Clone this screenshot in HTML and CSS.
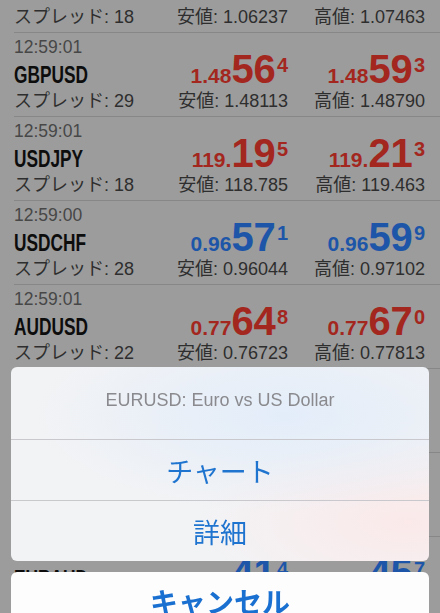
FILE: index.html
```html
<!DOCTYPE html>
<html lang="ja">
<head>
<meta charset="utf-8">
<title>Quotes</title>
<link rel="stylesheet" href="styles.css">
</head>
<body>
<div class="list">
  <div class="row">
    <div class="time">12:59:01</div>
    <div class="sym"><span>EURUSD</span></div>
    <div class="px red"><span class="s">1.06</span><span class="b">81</span><span class="u">9</span></div>
    <div class="px red ask"><span class="s">1.06</span><span class="b">83</span><span class="u">7</span></div>
    <div class="sub">スプレッド: 18</div>
    <div class="sub lo">安値: 1.06237</div>
    <div class="sub hi">高値: 1.07463</div>
  </div>
  <div class="row">
    <div class="time">12:59:01</div>
    <div class="sym"><span>GBPUSD</span></div>
    <div class="px red"><span class="s">1.48</span><span class="b">56</span><span class="u">4</span></div>
    <div class="px red ask"><span class="s">1.48</span><span class="b">59</span><span class="u">3</span></div>
    <div class="sub">スプレッド: 29</div>
    <div class="sub lo">安値: 1.48113</div>
    <div class="sub hi">高値: 1.48790</div>
  </div>
  <div class="row">
    <div class="time">12:59:01</div>
    <div class="sym"><span>USDJPY</span></div>
    <div class="px red"><span class="s">119.</span><span class="b">19</span><span class="u">5</span></div>
    <div class="px red ask"><span class="s">119.</span><span class="b">21</span><span class="u">3</span></div>
    <div class="sub">スプレッド: 18</div>
    <div class="sub lo">安値: 118.785</div>
    <div class="sub hi">高値: 119.463</div>
  </div>
  <div class="row">
    <div class="time">12:59:00</div>
    <div class="sym"><span>USDCHF</span></div>
    <div class="px blue"><span class="s">0.96</span><span class="b">57</span><span class="u">1</span></div>
    <div class="px blue ask"><span class="s">0.96</span><span class="b">59</span><span class="u">9</span></div>
    <div class="sub">スプレッド: 28</div>
    <div class="sub lo">安値: 0.96044</div>
    <div class="sub hi">高値: 0.97102</div>
  </div>
  <div class="row">
    <div class="time">12:59:01</div>
    <div class="sym"><span>AUDUSD</span></div>
    <div class="px red"><span class="s">0.77</span><span class="b">64</span><span class="u">8</span></div>
    <div class="px red ask"><span class="s">0.77</span><span class="b">67</span><span class="u">0</span></div>
    <div class="sub">スプレッド: 22</div>
    <div class="sub lo">安値: 0.76723</div>
    <div class="sub hi">高値: 0.77813</div>
  </div>
  <div class="row">
    <div class="time">12:59:01</div>
    <div class="sym"><span>USDCAD</span></div>
    <div class="px blue"><span class="s">1.25</span><span class="b">31</span><span class="u">2</span></div>
    <div class="px blue ask"><span class="s">1.25</span><span class="b">33</span><span class="u">8</span></div>
    <div class="sub">スプレッド: 26</div>
    <div class="sub lo">安値: 1.24965</div>
    <div class="sub hi">高値: 1.25611</div>
  </div>
  <div class="row">
    <div class="time">12:59:01</div>
    <div class="sym"><span>EURJPY</span></div>
    <div class="px red"><span class="s">127.</span><span class="b">51</span><span class="u">4</span></div>
    <div class="px red ask"><span class="s">127.</span><span class="b">54</span><span class="u">2</span></div>
    <div class="sub">スプレッド: 28</div>
    <div class="sub lo">安値: 126.981</div>
    <div class="sub hi">高値: 127.716</div>
  </div>
  <div class="row">
    <div class="time">12:59:01</div>
    <div class="sym"><span>EURAUD</span></div>
    <div class="px blue"><span class="s">1.37</span><span class="b">41</span><span class="u">4</span></div>
    <div class="px blue ask"><span class="s">1.37</span><span class="b">45</span><span class="u">7</span></div>
    <div class="sub">スプレッド: 43</div>
    <div class="sub lo">安値: 1.36812</div>
    <div class="sub hi">高値: 1.37930</div>
  </div>
</div>

<div class="sheet">
  <div class="group">
    <div class="title">EURUSD: Euro vs US Dollar</div>
    <div class="action">チャート</div>
    <div class="action">詳細</div>
  </div>
  <div class="group cancel">
    <div class="action bold">キャンセル</div>
  </div>
</div>
</body>
</html>
```

FILE: styles.css
```css
html, body {
  margin: 0;
  padding: 0;
}
body {
  width: 440px;
  height: 613px;
  overflow: hidden;
  background: #9c9c9c;
  font-family: "Liberation Sans", "Noto Sans CJK JP", sans-serif;
  color: #2c2c2c;
}

.list {
  margin-top: -51px;
  padding-left: 14px;
}

.row {
  display: grid;
  grid-template-columns: 1fr 120px 137px;
  grid-template-rows: 22px 29px 25px;
  padding: 3px 15px 4px 0;
  height: 76px;
  border-bottom: 1px solid #878787;
}

.time {
  grid-column: 1;
  grid-row: 1;
  font-size: 17.5px;
  line-height: 22px;
  color: #474747;
}

.sym {
  grid-column: 1;
  grid-row: 2;
  align-self: end;
  font-size: 24px;
  line-height: 24px;
  font-weight: 700;
  color: #0d0d0d;
}
.sym span {
  display: inline-block;
  transform: scaleX(0.72);
  transform-origin: left center;
}

.px {
  grid-column: 2;
  grid-row: 2;
  align-self: end;
  justify-self: end;
  font-size: 21px;
  line-height: 22px;
  font-weight: 700;
  white-space: nowrap;
}
.px.ask {
  grid-column: 3;
}
.px .b {
  font-size: 40px;
  line-height: 0;
}
.px .u {
  font-size: 20px;
  line-height: 0;
  vertical-align: 11px;
  margin-left: 1px;
}
.red { color: #a3271e; }
.blue { color: #1d55a8; }

.sub {
  grid-column: 1;
  grid-row: 3;
  align-self: end;
  font-size: 18px;
  line-height: 22px;
  color: #2e2e2e;
  white-space: nowrap;
}
.sub.lo {
  grid-column: 2;
  justify-self: end;
}
.sub.hi {
  grid-column: 3;
  justify-self: end;
}

/* action sheet */
.sheet {
  position: fixed;
  left: 11px;
  right: 11px;
  top: 367px;
  display: flex;
  flex-direction: column;
  gap: 11px;
}
.group {
  border-radius: 6px;
  overflow: hidden;
  background:
    radial-gradient(ellipse 60% 50% at 65% 25%, rgba(225, 236, 250, 0.9), rgba(225, 236, 250, 0) 100%),
    radial-gradient(ellipse 50% 45% at 95% 80%, rgba(252, 232, 232, 0.9), rgba(252, 232, 232, 0) 100%),
    #f2f3f5;
}
.title {
  height: 73px;
  display: flex;
  align-items: center;
  justify-content: center;
  font-size: 18px;
  color: #8a8a8e;
  padding-bottom: 6px;
  box-sizing: border-box;
  border-bottom: 1px solid #c9c9cd;
}
.action {
  height: 60px;
  display: flex;
  align-items: center;
  justify-content: center;
  font-size: 27px;
  color: #1f74cf;
  font-family: "Noto Sans CJK JP", sans-serif;
}
.action + .action {
  border-top: 1px solid #c9c9cd;
}
.group.cancel {
  background: #fdfdfd;
}
.action.bold {
  font-weight: 700;
  font-size: 28px;
  color: #1a70d0;
  height: 58px;
}
```
